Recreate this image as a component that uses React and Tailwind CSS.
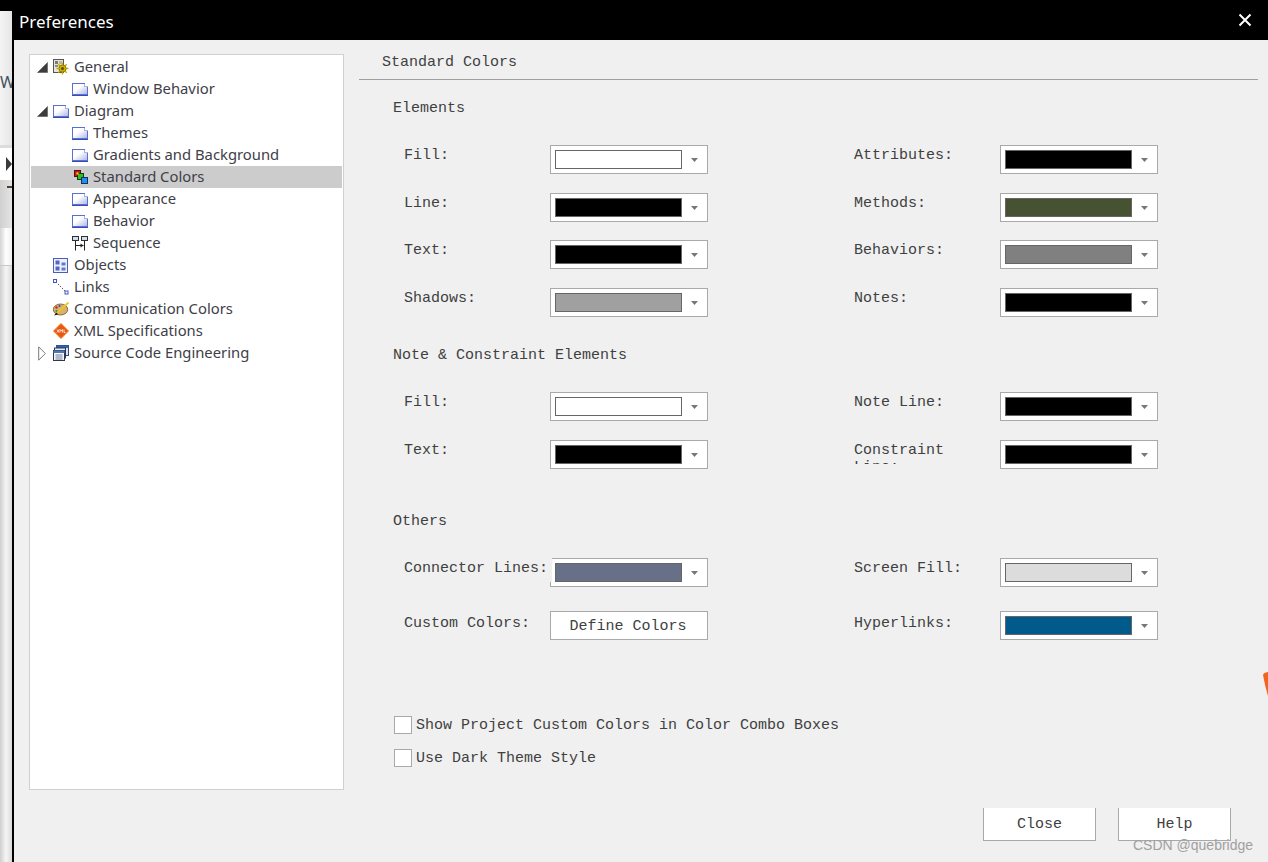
import React from "react";

function PageIcon() {
  return (
    <svg width="16" height="13" viewBox="0 0 16 13" className="shrink-0" shapeRendering="crispEdges">
      <defs>
        <linearGradient id="pg" x1="0" y1="0" x2="1" y2="1">
          <stop offset="0.4" stopColor="#ffffff" />
          <stop offset="1" stopColor="#aab4e8" />
        </linearGradient>
      </defs>
      <path d="M0.5 0.5 H12.5 L15.5 3.5 V11.5 H0.5 Z" fill="url(#pg)" stroke="#5a70d0" strokeWidth="1" />
      <path d="M12.5 0.5 V3.5 H15.5" fill="#ffffff" stroke="#aab4e0" strokeWidth="1" />
      <path d="M0 12 H16" stroke="#3a4cb4" strokeWidth="1" />
    </svg>
  );
}

function GeneralIcon() {
  return (
    <svg width="16" height="16" viewBox="0 0 16 16" className="shrink-0">
      <rect x="0.5" y="0.5" width="10" height="13" fill="#e4e4dc" stroke="#55554f" />
      <rect x="2" y="2" width="3" height="3" fill="#7a7a70" />
      <rect x="6" y="2" width="3" height="3" fill="#b8b8ae" />
      <rect x="2" y="6" width="3" height="2" fill="#8a8a80" />
      <circle cx="9.5" cy="9.5" r="3.6" fill="#e8d020" stroke="#6a5a00" strokeWidth="1" />
      <path d="M9.5 3.5V15.5M3.5 9.5H15.5M5.3 5.3L13.7 13.7M13.7 5.3L5.3 13.7" stroke="#c4a800" strokeWidth="1.4" />
      <circle cx="9.5" cy="9.5" r="1.5" fill="#5a5000" />
    </svg>
  );
}

function ColorsIcon() {
  return (
    <svg width="16" height="14" viewBox="0 0 16 14" className="shrink-0">
      <rect x="2.5" y="0.5" width="6" height="6" fill="#e01010" stroke="#501010" />
      <rect x="5.5" y="3.5" width="6" height="6" fill="#30c020" stroke="#104010" />
      <rect x="4.5" y="2.5" width="2" height="2" fill="#f0e020" />
      <rect x="9.5" y="7.5" width="6" height="6" fill="#2090f0" stroke="#103060" />
    </svg>
  );
}

function SequenceIcon() {
  return (
    <svg width="16" height="15" viewBox="0 0 16 15" className="shrink-0">
      <rect x="0.5" y="0.5" width="6" height="4" fill="#cfe0f0" stroke="#303030" />
      <rect x="9.5" y="0.5" width="6" height="4" fill="#cfe0f0" stroke="#303030" />
      <path d="M3.5 5V14.5M12.5 5V14.5" stroke="#202020" />
      <path d="M3.5 9.5H11.5" stroke="#202020" />
      <path d="M8.5 7.5L11.5 9.5L8.5 11.5Z" fill="#202020" />
    </svg>
  );
}

function ObjectsIcon() {
  return (
    <svg width="15" height="15" viewBox="0 0 15 15" className="shrink-0">
      <rect x="0.5" y="0.5" width="14" height="14" fill="#eef0fa" stroke="#4a5cc0" />
      <rect x="2.5" y="2.5" width="4" height="4" fill="#4f66c8" />
      <rect x="8.5" y="4.5" width="4" height="3" fill="#6478d0" />
      <rect x="2.5" y="8.5" width="4" height="4" fill="#4f66c8" />
      <rect x="8.5" y="9.5" width="4" height="3" fill="#6478d0" />
    </svg>
  );
}

function LinksIcon() {
  return (
    <svg width="16" height="16" viewBox="0 0 16 16" className="shrink-0">
      <path d="M3 3L13 13" stroke="#505050" strokeDasharray="1.4 1.4" />
      <rect x="0.5" y="0.5" width="3" height="3" fill="#ffffff" stroke="#3f55c4" />
      <rect x="12" y="12" width="3" height="3" fill="#ffffff" stroke="#3f55c4" />
    </svg>
  );
}

function PaletteIcon() {
  return (
    <svg width="16" height="14" viewBox="0 0 16 14" className="shrink-0">
      <ellipse cx="7.5" cy="7.5" rx="7.2" ry="5.5" fill="#d8b070" stroke="#705020" strokeWidth="0.8" />
      <circle cx="3.5" cy="5.5" r="1.2" fill="#e02020" />
      <circle cx="6.5" cy="4" r="1.1" fill="#2050e0" />
      <circle cx="3.5" cy="9" r="1.1" fill="#20a040" />
      <path d="M15.5 0.5L3 12" stroke="#e8c820" strokeWidth="1.8" />
      <path d="M3.5 10.5L1 13.5L5 12.5Z" fill="#101010" />
    </svg>
  );
}

function XmlIcon() {
  return (
    <svg width="16" height="16" viewBox="0 0 16 16" className="shrink-0">
      <path d="M8 0.5L15.5 8L8 15.5L0.5 8Z" fill="#e85810" stroke="#f08020" />
      <path d="M4 6.5L6 9.5M6 6.5L4 9.5M7 9.5V6.5L8.2 8L9.4 6.5V9.5M11 6.5V9.5H12.5" stroke="#ffffff" strokeWidth="0.8" fill="none" />
    </svg>
  );
}

function SourceIcon() {
  return (
    <svg width="16" height="16" viewBox="0 0 16 16" className="shrink-0">
      <rect x="3.5" y="0.5" width="12" height="10" fill="#d8e4f4" stroke="#2a4a80" />
      <rect x="3.5" y="0.5" width="12" height="2.5" fill="#3060b0" />
      <rect x="1.5" y="3" width="11" height="10" fill="#e6ecf6" stroke="#303848" />
      <rect x="0.5" y="5.5" width="11" height="10" fill="#f4f6fa" stroke="#303848" />
      <rect x="0.5" y="5.5" width="11" height="2.5" fill="#5078b8" />
      <path d="M2.5 10H9.5M2.5 12H9.5M2.5 14H9.5" stroke="#7080a0" />
    </svg>
  );
}

function ExpandedArrow() {
  return (
    <svg width="11" height="11" viewBox="0 0 11 11" className="shrink-0">
      <path d="M10.5 0.5V10.5H0.5Z" fill="#3c3c3c" stroke="#6a6a6a" strokeWidth="0.8" />
    </svg>
  );
}

function CollapsedArrow() {
  return (
    <svg width="8" height="15" viewBox="0 0 8 15" className="shrink-0">
      <path d="M0.7 0.8L7.3 7.5L0.7 14.2Z" fill="#ffffff" stroke="#7a7a7a" strokeWidth="1" />
    </svg>
  );
}

const treeRows = [
  { label: "General", level: 1, icon: <GeneralIcon />, arrow: "open" },
  { label: "Window Behavior", level: 2, icon: <PageIcon /> },
  { label: "Diagram", level: 1, icon: <PageIcon />, arrow: "open" },
  { label: "Themes", level: 2, icon: <PageIcon /> },
  { label: "Gradients and Background", level: 2, icon: <PageIcon /> },
  { label: "Standard Colors", level: 2, icon: <ColorsIcon />, selected: true },
  { label: "Appearance", level: 2, icon: <PageIcon /> },
  { label: "Behavior", level: 2, icon: <PageIcon /> },
  { label: "Sequence", level: 2, icon: <SequenceIcon /> },
  { label: "Objects", level: 1, icon: <ObjectsIcon /> },
  { label: "Links", level: 1, icon: <LinksIcon /> },
  { label: "Communication Colors", level: 1, icon: <PaletteIcon /> },
  { label: "XML Specifications", level: 1, icon: <XmlIcon /> },
  { label: "Source Code Engineering", level: 1, icon: <SourceIcon />, arrow: "closed" },
];

function TreeRow({ row }) {
  return (
    <div className={`flex h-[22px] items-center ${row.selected ? "bg-[#cccccc]" : ""}`}>
      {row.level === 1 ? (
        <>
          <span className="flex w-[22px] shrink-0 items-center justify-center">
            {row.arrow === "open" && <ExpandedArrow />}
            {row.arrow === "closed" && <CollapsedArrow />}
          </span>
          <span className="flex w-[21px] shrink-0 items-center">{row.icon}</span>
        </>
      ) : (
        <span className="ml-[41px] flex w-[21px] shrink-0 items-center">{row.icon}</span>
      )}
      <span className="whitespace-nowrap pb-[2px] font-['Noto_Sans',sans-serif] text-[14.8px] text-[#404048]">{row.label}</span>
    </div>
  );
}

function Combo({ color }) {
  return (
    <div className="flex h-[29px] w-[158px] shrink-0 items-center border border-[#a9a9a9] bg-white pl-1">
      <div className="h-[19px] w-[127px] border border-[#666666]" style={{ backgroundColor: color }} />
      <svg width="8" height="4" viewBox="0 0 8 4" className="ml-[9px]">
        <path d="M0 0H7L3.5 4Z" fill="#777777" />
      </svg>
    </div>
  );
}

function Cell({ label, color, overlap, clip, low, button }) {
  return (
    <div className="flex w-[315px] shrink-0 items-start pl-[11px]">
      {overlap ? (
        <div className="relative z-10 -mr-[2px] h-6 w-[148px] shrink-0 overflow-hidden bg-[#f0f0f0] pt-px text-[15px] leading-5">{label}</div>
      ) : clip ? (
        <div className="mt-[2px] h-[22px] w-[146px] shrink-0 overflow-hidden pr-[40px] text-[15px] leading-[17px]">{label}</div>
      ) : (
        <div className={`${low ? "mt-[3px]" : "mt-px"} w-[146px] shrink-0 text-[15px] leading-5`}>{label}</div>
      )}
      {button ? (
        <div className="flex h-[29px] w-[158px] shrink-0 items-center justify-center border border-[#a9a9a9] bg-white pr-[2px] pt-1 text-[15px]">{button}</div>
      ) : (
        <Combo color={color} />
      )}
    </div>
  );
}

function Row({ left, right, className }) {
  return (
    <div className={`flex gap-[135px] ${className}`}>
      <Cell {...left} />
      <Cell {...right} />
    </div>
  );
}

function Check({ label, className }) {
  return (
    <div className={`flex items-start ${className}`}>
      <div className="ml-px h-[18px] w-[18px] shrink-0 border border-[#a9a9a9] bg-white" />
      <span className="ml-[4px] whitespace-nowrap text-[15px] leading-5">{label}</span>
    </div>
  );
}

function LeftStrip() {
  return (
    <div className="flex h-full w-[12px] shrink-0 flex-col overflow-hidden bg-[#f0f0f0]">
      <div className="h-[11px] shrink-0 bg-black" />
      <div className="h-[134px] shrink-0 overflow-hidden bg-gradient-to-r from-[#f4f4f4] to-[#e6e6e6] pt-[61px]">
        <span className="block font-['Noto_Sans',sans-serif] text-[16px] leading-5 text-[#405060]">W</span>
      </div>
      <div className="h-[3px] shrink-0 bg-[#dcdcdc]" />
      <div className="flex h-[32px] shrink-0 items-center justify-end bg-white">
        <svg width="6" height="14" viewBox="0 0 6 14"><path d="M0 0L6 7L0 14Z" fill="#3a3a3a" /></svg>
      </div>
      <div className="flex h-[48px] shrink-0 justify-end bg-gradient-to-r from-[#d0d0d0] to-[#e4e4e4] pt-[6px]">
        <div className="h-[2px] w-[5px] bg-[#504030]" />
      </div>
      <div className="h-[37px] shrink-0 bg-gradient-to-r from-[#d4d4d4] via-[#ffffff] to-[#efefef]" />
      <div className="h-px shrink-0 bg-[#c8c8c8]" />
      <div className="flex-1 bg-gradient-to-r from-[#cfcfcf] via-[#f6f6f6] to-[#dadada]" />
    </div>
  );
}

export default function App() {
  return (
    <div className="relative flex h-[862px] w-[1268px] overflow-hidden bg-[#f0f0f0] font-['Liberation_Mono',monospace] text-[#404040]">
      <LeftStrip />
      <div className="flex min-w-0 flex-1 flex-col">
        <div className="flex h-10 shrink-0 items-center justify-between bg-black pl-[7px] pr-[16px] text-white">
          <span className="pt-1 font-['Noto_Sans',sans-serif] text-[17px]">Preferences</span>
          <svg width="14" height="14" viewBox="0 0 14 14" className="mb-px">
            <path d="M1.5 1.5L12.5 12.5M12.5 1.5L1.5 12.5" stroke="#ffffff" strokeWidth="2" />
          </svg>
        </div>
        <div className="flex min-h-0 flex-1 border-l-2 border-black">
          <div className="ml-[15px] mt-[14px] h-[736px] w-[315px] shrink-0 border border-[#d0d0d0] bg-white p-px">
            {treeRows.map((r) => (
              <TreeRow key={r.label} row={r} />
            ))}
          </div>
          <div className="ml-[15px] flex min-w-0 flex-1 flex-col">
            <div className="mr-[10px] mt-[13px] h-[27px] border-b border-[#a0a0a0] pl-[23px] text-[15px] leading-5">Standard Colors</div>
            <div className="pl-[34px]">
              <div className="mt-[19px] text-[15px] leading-5">Elements</div>
              <Row className="mt-[26px]" left={{ label: "Fill:", color: "#ffffff" }} right={{ label: "Attributes:", color: "#000000" }} />
              <Row className="mt-[19px]" left={{ label: "Line:", color: "#000000" }} right={{ label: "Methods:", color: "#465232" }} />
              <Row className="mt-[18px]" left={{ label: "Text:", color: "#000000" }} right={{ label: "Behaviors:", color: "#808080" }} />
              <Row className="mt-[19px]" left={{ label: "Shadows:", color: "#a0a0a0" }} right={{ label: "Notes:", color: "#000000" }} />
              <div className="mt-[29px] text-[15px] leading-5">Note &amp; Constraint Elements</div>
              <Row className="mt-[26px]" left={{ label: "Fill:", color: "#ffffff" }} right={{ label: "Note Line:", color: "#000000" }} />
              <Row className="mt-[19px]" left={{ label: "Text:", color: "#000000" }} right={{ label: "Constraint Line:", color: "#000000", clip: true }} />
              <div className="mt-[43px] text-[15px] leading-5">Others</div>
              <Row className="mt-[26px]" left={{ label: "Connector Lines:", color: "#687088", overlap: true }} right={{ label: "Screen Fill:", color: "#dcdcdc" }} />
              <Row className="mt-[24px]" left={{ label: "Custom Colors:", button: "Define Colors", low: true }} right={{ label: "Hyperlinks:", color: "#005a8c", low: true }} />
              <Check className="mt-[76px]" label="Show Project Custom Colors in Color Combo Boxes" />
              <Check className="mt-[13px]" label="Use Dark Theme Style" />
            </div>
            <div className="mr-[37px] mt-[39px] flex justify-end gap-[22px]">
              <div className="flex h-[33px] w-[113px] items-center justify-center border-x border-b border-[#a9a9a9] bg-white pt-[2px] text-[15px]">Close</div>
              <div className="flex h-[33px] w-[113px] items-center justify-center border-x border-b border-[#a9a9a9] bg-white pt-[2px] text-[15px]">Help</div>
            </div>
          </div>
        </div>
      </div>
      <svg width="6" height="24" viewBox="0 0 6 24" className="absolute left-[1262px] top-[672px]">
        <path d="M1 3Q1.5 0.5 6 0V24Q3 14 1 3Z" fill="#f4631e" />
      </svg>
      <span className="absolute left-[1133px] top-[835px] font-['Liberation_Sans',sans-serif] text-[14px] leading-5 text-[#a0a0a0]">CSDN @quebridge</span>
    </div>
  );
}
